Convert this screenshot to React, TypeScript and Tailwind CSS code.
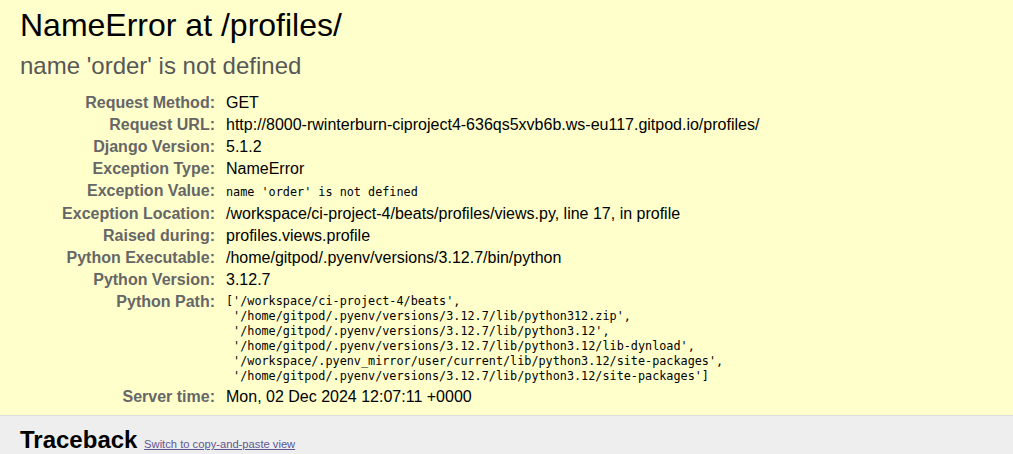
const sans = "font-['Liberation_Sans',Arial,sans-serif]";
const mono = "font-['DejaVu_Sans_Mono',Consolas,monospace]";

type Row = { label: string; value: string; code?: boolean };

const META: Row[] = [
  { label: "Request Method:", value: "GET" },
  {
    label: "Request URL:",
    value:
      "http://8000-rwinterburn-ciproject4-636qs5xvb6b.ws-eu117.gitpod.io/profiles/",
  },
  { label: "Django Version:", value: "5.1.2" },
  { label: "Exception Type:", value: "NameError" },
  { label: "Exception Value:", value: "name 'order' is not defined", code: true },
  {
    label: "Exception Location:",
    value: "/workspace/ci-project-4/beats/profiles/views.py, line 17, in profile",
  },
  { label: "Raised during:", value: "profiles.views.profile" },
  { label: "Python Executable:", value: "/home/gitpod/.pyenv/versions/3.12.7/bin/python" },
  { label: "Python Version:", value: "3.12.7" },
];

const PYTHON_PATH = `['/workspace/ci-project-4/beats',
 '/home/gitpod/.pyenv/versions/3.12.7/lib/python312.zip',
 '/home/gitpod/.pyenv/versions/3.12.7/lib/python3.12',
 '/home/gitpod/.pyenv/versions/3.12.7/lib/python3.12/lib-dynload',
 '/workspace/.pyenv_mirror/user/current/lib/python3.12/site-packages',
 '/home/gitpod/.pyenv/versions/3.12.7/lib/python3.12/site-packages']`;

function Label({ children }: { children: string }) {
  return (
    <div className="py-[2px] pl-[3px] pr-2 text-right font-bold leading-[18px] text-[#666]">
      {children}
    </div>
  );
}

export default function App() {
  return (
    <div className={`${sans} min-h-[454px] bg-white text-[16px] text-black`}>
      <div className="border-b border-[#ddd] bg-[#ffc] px-5 pt-[10px] pb-[7px]">
        <h1 className="text-[32px] font-normal leading-[30px]">
          NameError at /profiles/
        </h1>
        <pre
          className={`${sans} mt-[10px] mb-[10px] text-[24px] leading-[32px] text-[#575757]`}
        >
          name 'order' is not defined
        </pre>
        <div className="grid grid-cols-[203px_1fr]">
          {META.map((row) => (
            <div key={row.label} className="contents">
              <Label>{row.label}</Label>
              <div className="py-[2px] px-[3px] leading-[18px]">
                {row.code ? (
                  <code className={`${mono} text-[11.8px]`}>{row.value}</code>
                ) : (
                  row.value
                )}
              </div>
            </div>
          ))}
          <Label>Python Path:</Label>
          <div className="py-[2px] px-[3px]">
            <pre className={`${mono} mt-[1px] whitespace-pre text-[11.8px] leading-[15px]`}>
              {PYTHON_PATH}
            </pre>
          </div>
          <Label>Server time:</Label>
          <div className="py-[2px] px-[3px] leading-[18px]">
            Mon, 02 Dec 2024 12:07:11 +0000
          </div>
        </div>
      </div>
      <div className="bg-[#eee] px-5 py-[10px]">
        <h2 className="text-[24px] font-bold leading-[28px]">
          Traceback{" "}
          <span className="text-[11.2px] font-normal">
            <a href="#" className="text-[#5E5694] underline">
              Switch to copy-and-paste view
            </a>
          </span>
        </h2>
      </div>
    </div>
  );
}
